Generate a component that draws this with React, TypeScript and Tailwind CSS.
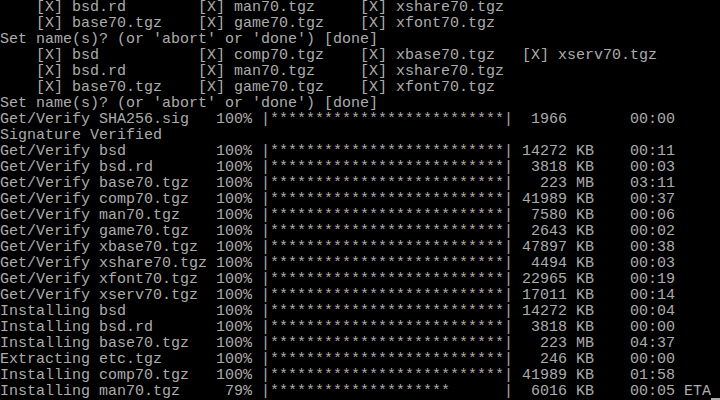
import React from 'react';

const sets = (cols: string[]) => {
  let line = '    ';
  cols.forEach((c, i) => {
    const item = `[X] ${c}`;
    line += i < cols.length - 1 ? item.padEnd(18, ' ') : item;
  });
  return line;
};

const progress = (label: string, pct: number, size: string, unit: string, time: string, eta = false) => {
  const stars = '*'.repeat(Math.floor((26 * pct) / 100)).padEnd(26, ' ');
  return `${label.padEnd(24, ' ')}${String(pct).padStart(3, ' ')}% |${stars}| ${size.padStart(5, ' ')} ${unit.padEnd(2, ' ')}    ${time}${eta ? ' ETA' : ''}`;
};

const App: React.FC = () => {
  const lines = [
    sets(['bsd.rd', 'man70.tgz', 'xshare70.tgz']),
    sets(['base70.tgz', 'game70.tgz', 'xfont70.tgz']),
    "Set name(s)? (or 'abort' or 'done') [done]",
    sets(['bsd', 'comp70.tgz', 'xbase70.tgz', 'xserv70.tgz']),
    sets(['bsd.rd', 'man70.tgz', 'xshare70.tgz']),
    sets(['base70.tgz', 'game70.tgz', 'xfont70.tgz']),
    "Set name(s)? (or 'abort' or 'done') [done]",
    progress('Get/Verify SHA256.sig', 100, '1966', '', '00:00'),
    'Signature Verified',
    progress('Get/Verify bsd', 100, '14272', 'KB', '00:11'),
    progress('Get/Verify bsd.rd', 100, '3818', 'KB', '00:03'),
    progress('Get/Verify base70.tgz', 100, '223', 'MB', '03:11'),
    progress('Get/Verify comp70.tgz', 100, '41989', 'KB', '00:37'),
    progress('Get/Verify man70.tgz', 100, '7580', 'KB', '00:06'),
    progress('Get/Verify game70.tgz', 100, '2643', 'KB', '00:02'),
    progress('Get/Verify xbase70.tgz', 100, '47897', 'KB', '00:38'),
    progress('Get/Verify xshare70.tgz', 100, '4494', 'KB', '00:03'),
    progress('Get/Verify xfont70.tgz', 100, '22965', 'KB', '00:19'),
    progress('Get/Verify xserv70.tgz', 100, '17011', 'KB', '00:14'),
    progress('Installing bsd', 100, '14272', 'KB', '00:04'),
    progress('Installing bsd.rd', 100, '3818', 'KB', '00:00'),
    progress('Installing base70.tgz', 100, '223', 'MB', '04:37'),
    progress('Extracting etc.tgz', 100, '246', 'KB', '00:00'),
    progress('Installing comp70.tgz', 100, '41989', 'KB', '01:58'),
  ];

  return (
    <div className="w-[720px] h-[400px] bg-black overflow-hidden text-[#acacac] font-['Liberation_Mono',monospace] text-[15px] leading-4 whitespace-pre">
      {lines.map((line, i) => (
        <div key={i} className="h-4">
          {line}
        </div>
      ))}
      <div className="h-4 flex">
        <span>{progress('Installing man70.tgz', 79, '6016', 'KB', '00:05', true)}</span>
        <span className="inline-block w-[9px] h-4 border-b-2 border-[#acacac]" />
      </div>
    </div>
  );
};

export default App;
